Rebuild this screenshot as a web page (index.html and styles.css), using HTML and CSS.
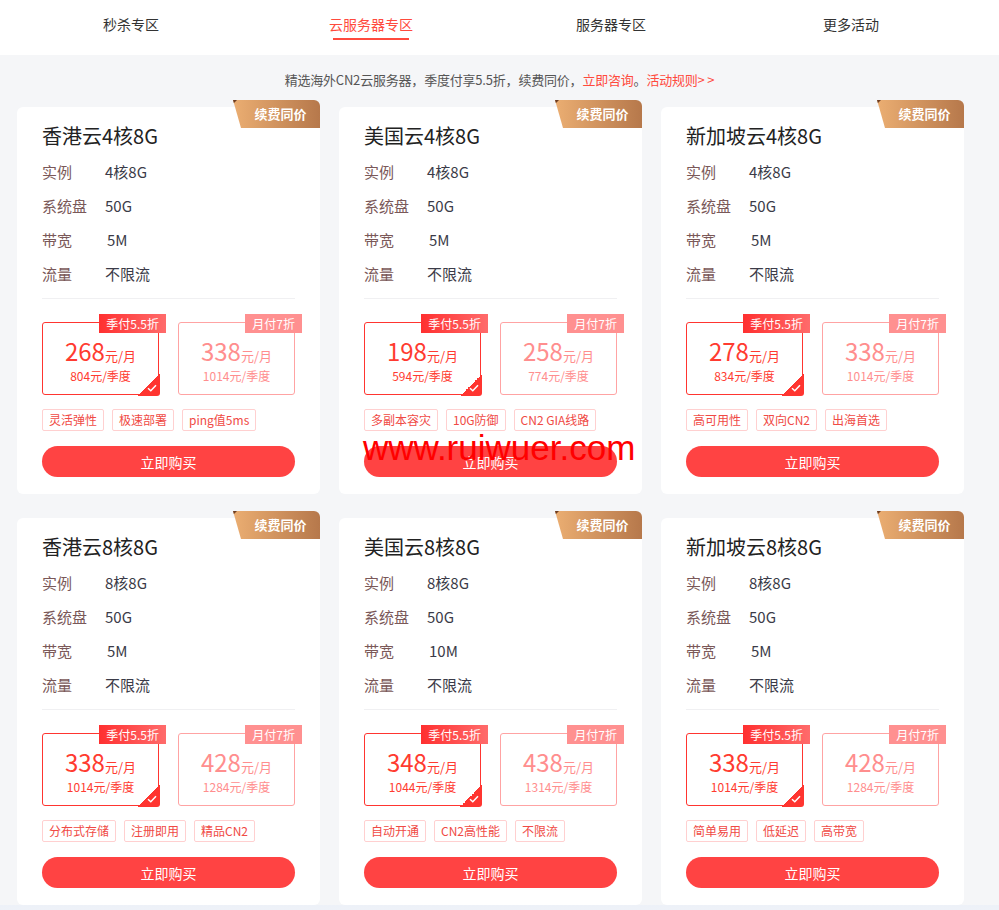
FILE: index.html
```html
<!DOCTYPE html>
<html lang="zh-CN">
<head>
  <meta charset="UTF-8">
  <meta name="viewport" content="width=device-width, initial-scale=1.0">
  <title>云服务器专区</title>
  <link rel="stylesheet" href="styles.css">
</head>
<body>
  <div class="nav">
    <div class="nav-inner">
      <a href="#">秒杀专区</a>
      <a href="#" class="active">云服务器专区</a>
      <a href="#">服务器专区</a>
      <a href="#">更多活动</a>
    </div>
  </div>

  <p class="notice">精选海外CN2云服务器，季度付享5.5折，续费同价，<a href="#">立即咨询</a>。<a href="#">活动规则&gt; &gt;</a></p>

  <div class="grid" id="grid"></div>

  <div class="watermark">www.ruiwuer.com</div>

  <script>
    const plans = [
      { name: '香港云4核8G', cpu: '4核8G', bw: '5M', q: [268, 804], m: [338, 1014], tags: ['灵活弹性', '极速部署', 'ping值5ms'] },
      { name: '美国云4核8G', cpu: '4核8G', bw: '5M', q: [198, 594], m: [258, 774], tags: ['多副本容灾', '10G防御', 'CN2 GIA线路'] },
      { name: '新加坡云4核8G', cpu: '4核8G', bw: '5M', q: [278, 834], m: [338, 1014], tags: ['高可用性', '双向CN2', '出海首选'] },
      { name: '香港云8核8G', cpu: '8核8G', bw: '5M', q: [338, 1014], m: [428, 1284], tags: ['分布式存储', '注册即用', '精品CN2'] },
      { name: '美国云8核8G', cpu: '8核8G', bw: '10M', q: [348, 1044], m: [438, 1314], tags: ['自动开通', 'CN2高性能', '不限流'] },
      { name: '新加坡云8核8G', cpu: '8核8G', bw: '5M', q: [338, 1014], m: [428, 1284], tags: ['简单易用', '低延迟', '高带宽'] }
    ];

    const grid = document.getElementById('grid');
    plans.forEach(p => {
      const card = document.createElement('div');
      card.className = 'card';
      card.innerHTML = `
        <span class="ribbon">续费同价</span>
        <h3>${p.name}</h3>
        <ul class="specs">
          <li><span class="label">实例</span><span class="value">${p.cpu}</span></li>
          <li><span class="label">系统盘</span><span class="value">50G</span></li>
          <li><span class="label">带宽</span><span class="value bw">${p.bw}</span></li>
          <li><span class="label">流量</span><span class="value">不限流</span></li>
        </ul>
        <div class="prices">
          <div class="price-box selected">
            <span class="tag">季付5.5折</span>
            <div class="month"><b>${p.q[0]}</b>元/月</div>
            <div class="quarter">${p.q[1]}元/季度</div>
            <span class="check">
              <svg width="10" height="8" viewBox="0 0 10 8"><path d="M1 4.2 L3.8 6.8 L9 1.2" fill="none" stroke="#fff" stroke-width="1.5"/></svg>
            </span>
          </div>
          <div class="price-box">
            <span class="tag">月付7折</span>
            <div class="month"><b>${p.m[0]}</b>元/月</div>
            <div class="quarter">${p.m[1]}元/季度</div>
          </div>
        </div>
        <div class="features">${p.tags.map(t => `<span>${t}</span>`).join('')}</div>
        <button class="buy-btn">立即购买</button>
      `;
      grid.appendChild(card);
    });
  </script>
</body>
</html>
```

FILE: styles.css
```css
body {
  margin: 0;
  padding: 0;
  font-family: "Noto Sans CJK SC", "Noto Sans", sans-serif;
  background: linear-gradient(#edf1f8, #f5f6f8 40px) #f5f6f8;
  color: #333;
  position: relative;
}

a {
  text-decoration: none;
}

/* Top tabs */
.nav {
  background: #fff;
  height: 55px;
}

.nav-inner {
  display: flex;
  padding-left: 11px;
}

.nav-inner a {
  width: 240px;
  text-align: center;
  font-size: 14px;
  line-height: 20px;
  color: #333;
  padding-top: 14px;
}

.nav-inner a.active {
  color: #ff4a3d;
}

.nav-inner a.active::after {
  content: "";
  display: block;
  width: 76px;
  height: 2px;
  margin: 4px auto 0;
  background: #ff4a3d;
}

.notice {
  margin: 0;
  padding: 15px 0 17px;
  text-align: center;
  font-size: 13px;
  line-height: 20px;
  color: #555;
  letter-spacing: -0.2px;
}

.notice a {
  color: #ff4a3d;
}

/* Cards */
.grid {
  display: grid;
  grid-template-columns: repeat(3, 303px);
  column-gap: 19px;
  row-gap: 24px;
  padding-left: 17px;
}

.card {
  position: relative;
  background: #fff;
  border-radius: 6px;
  padding: 14px 25px 17px;
}

.ribbon {
  position: absolute;
  top: -7px;
  right: 0;
  width: 87px;
  height: 28px;
  padding-left: 8px;
  box-sizing: border-box;
  background: linear-gradient(90deg, #ebae72, #b6784b);
  border-radius: 0 6px 0 0;
  clip-path: polygon(0 0, 100% 0, 100% 100%, 8px 100%);
  color: #fff;
  font-size: 13px;
  font-weight: bold;
  line-height: 28px;
  text-align: center;
}

.ribbon::before {
  content: "";
  position: absolute;
  top: 0;
  left: 0;
  border-style: solid;
  border-width: 4px 4px 0 0;
  border-color: #6d3d22 transparent transparent transparent;
}

.card h3 {
  margin: 0;
  font-size: 20px;
  font-weight: normal;
  line-height: 30px;
  color: #222;
}

.specs {
  list-style: none;
  margin: 4px 0 0;
  padding: 0 0 7px;
  border-bottom: 1px solid #f0f0f2;
}

.specs li {
  display: flex;
  font-size: 15px;
  line-height: 34px;
}

.specs .label {
  width: 63px;
  color: #7a5858;
}

.specs .value {
  color: #3b3b48;
}

.specs .value.bw {
  padding-left: 2px;
}

/* Price boxes */
.prices {
  display: flex;
  gap: 19px;
  margin-top: 23px;
}

.price-box {
  position: relative;
  width: 117px;
  height: 73px;
  box-sizing: border-box;
  border: 1.5px solid #ffa3a3;
  border-radius: 3px;
  text-align: center;
  color: #ff8e8e;
  padding-top: 15px;
}

.price-box.selected {
  border-color: #ff3530;
  color: #ff3b30;
}

.price-box .tag {
  position: absolute;
  top: -9px;
  right: -8px;
  height: 19px;
  padding: 0 7px;
  background: #ff9090;
  color: #fff;
  font-size: 12px;
  line-height: 19px;
}

.price-box.selected .tag {
  background: linear-gradient(90deg, #ff3030, #ff6b6b);
}

.month {
  font-size: 13px;
  line-height: 26px;
}

.month b {
  font-size: 24px;
  font-weight: normal;
}

.quarter {
  font-size: 12px;
  line-height: 14px;
}

.check {
  position: absolute;
  right: -1.5px;
  bottom: -1.5px;
  width: 22px;
  height: 22px;
  background: linear-gradient(135deg, transparent 50%, #ff3530 50%);
  border-bottom-right-radius: 3px;
}

.check svg {
  position: absolute;
  right: 3px;
  bottom: 4px;
}

/* Feature tags */
.features {
  display: flex;
  gap: 8px;
  margin-top: 14px;
}

.features span {
  height: 22px;
  box-sizing: border-box;
  padding: 0 6px;
  border: 1px solid #ffd0d0;
  border-radius: 2px;
  font-size: 12px;
  line-height: 20px;
  color: #f04a45;
}

.buy-btn {
  display: block;
  width: 100%;
  height: 31px;
  margin-top: 15px;
  border: none;
  border-radius: 16px;
  background: #ff4343;
  color: #fff;
  font-family: inherit;
  font-size: 14px;
  cursor: pointer;
}

.watermark {
  position: absolute;
  left: 363px;
  top: 428px;
  font-family: "Liberation Sans", Arial, sans-serif;
  font-size: 35px;
  line-height: 40px;
  color: #ff0000;
  pointer-events: none;
}
```
